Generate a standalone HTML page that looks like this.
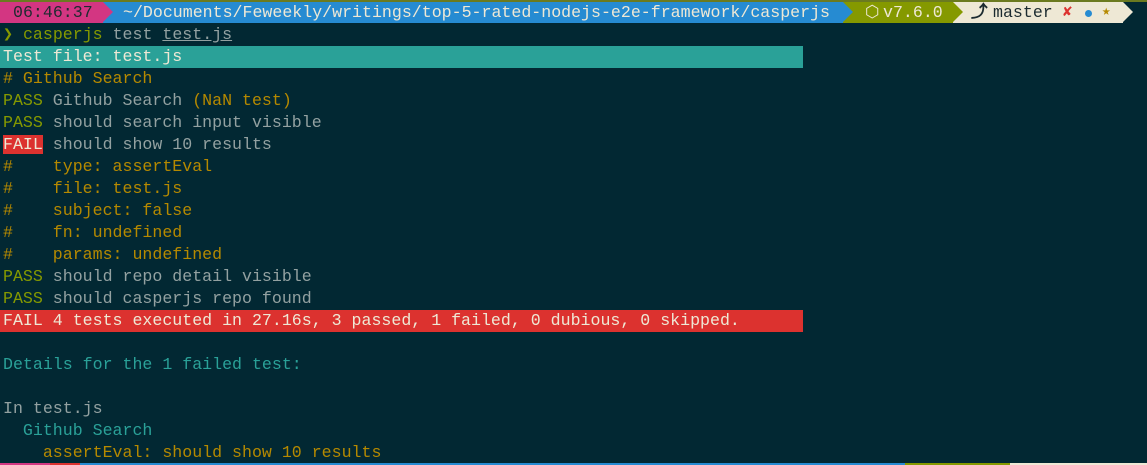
<html><head><style>
body{margin:0;width:1147px;height:465px;background:#022833;overflow:hidden;font-family:"Liberation Mono",monospace;font-size:16.6px;}
.r{position:absolute;left:3px;height:22px;line-height:22px;white-space:pre;color:#93a1a1}
.y{color:#b58900}.g{color:#859900}.c{color:#2aa198}
.seg{position:absolute;top:2px;height:21px;line-height:21px;white-space:pre;overflow:hidden}
.a{position:absolute;top:2px;height:21px;line-height:21px;white-space:pre}
.t{position:absolute;top:2px;border-top:10.5px solid transparent;border-bottom:10.5px solid transparent}
</style></head><body>
<div style="position:absolute;top:0;left:0;width:1147px;height:2px;background:#6b7a20"></div>
<div class="seg" style="left:0;width:103px;background:#d33682;color:#1c2b30;padding-left:13px;box-sizing:border-box">06:46:37</div>
<div class="seg" style="left:103px;width:740px;background:#268bd2;color:#eee8d5;padding-left:20px;box-sizing:border-box">~/Documents/Feweekly/writings/top-5-rated-nodejs-e2e-framework/casperjs</div>
<div class="t" style="left:103px;border-left:10px solid #d33682"></div>
<div class="seg" style="left:843px;width:110px;background:#859900"></div>
<div class="a" style="left:865px;color:#eee8d5">⬡</div>
<div class="a" style="left:883px;color:#eee8d5">v7.6.0</div>
<div class="t" style="left:843px;border-left:10px solid #268bd2"></div>
<div class="seg" style="left:953px;width:170px;background:#eee8d5"></div>
<div class="t" style="left:953px;border-left:10px solid #859900"></div>
<div class="t" style="left:1123px;border-left:10px solid #eee8d5"></div>
<div class="a" style="left:971px;color:#1c2b30;font-weight:bold">⤴</div>
<div class="a" style="left:993px;color:#1c2b30">master</div>
<div class="a" style="left:1063px;color:#dc322f;font-size:15px;font-weight:bold">✘</div>
<div style="position:absolute;left:1085px;top:10px;width:7px;height:7px;border-radius:50%;background:#268bd2"></div>
<div class="a" style="left:1102px;color:#b58900;font-size:14px">★</div>
<div class="r" style="top:24px"><span class="g">❯ casperjs</span> test <u>test.js</u></div>
<div class="r" style="top:46px;background:#2aa198;color:#eee8d5;width:800px;left:0;padding-left:3px">Test file: test.js</div>
<div class="r y" style="top:68px"># Github Search</div>
<div class="r" style="top:90px"><span class="g">PASS</span> Github Search <span class="y">(NaN test)</span></div>
<div class="r" style="top:112px"><span class="g">PASS</span> should search input visible</div>
<div class="r" style="top:134px"><span style="background:#dc322f;color:#eee8d5">FAIL</span> should show 10 results</div>
<div class="r y" style="top:156px">#    type: assertEval</div>
<div class="r y" style="top:178px">#    file: test.js</div>
<div class="r y" style="top:200px">#    subject: false</div>
<div class="r y" style="top:222px">#    fn: undefined</div>
<div class="r y" style="top:244px">#    params: undefined</div>
<div class="r" style="top:266px"><span class="g">PASS</span> should repo detail visible</div>
<div class="r" style="top:288px"><span class="g">PASS</span> should casperjs repo found</div>
<div class="r" style="top:310px;background:#dc322f;color:#eee8d5;width:800px;left:0;padding-left:3px">FAIL 4 tests executed in 27.16s, 3 passed, 1 failed, 0 dubious, 0 skipped.</div>
<div class="r c" style="top:354px">Details for the 1 failed test:</div>
<div class="r" style="top:398px">In test.js</div>
<div class="r c" style="top:420px">  Github Search</div>
<div class="r y" style="top:442px">    assertEval: should show 10 results</div>
<div style="position:absolute;top:463px;left:0;height:2px;width:50px;background:#d33682"></div>
<div style="position:absolute;top:463px;left:50px;height:2px;width:30px;background:#dc322f"></div>
<div style="position:absolute;top:463px;left:80px;height:2px;width:825px;background:#268bd2"></div>
<div style="position:absolute;top:463px;left:905px;height:2px;width:105px;background:#859900"></div>
<div style="position:absolute;top:463px;left:1010px;height:2px;width:137px;background:#eee8d5"></div>
</body></html>
